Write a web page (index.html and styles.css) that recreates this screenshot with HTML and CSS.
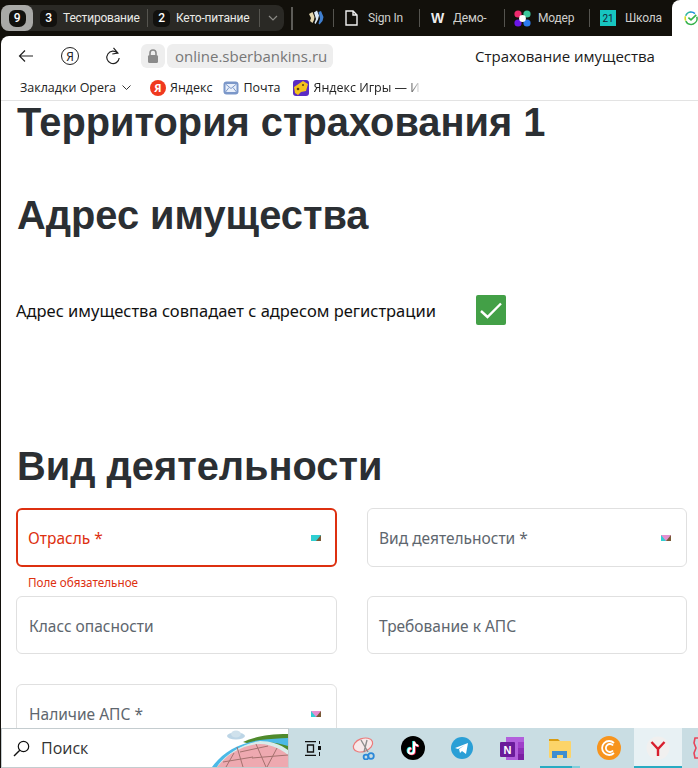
FILE: index.html
```html
<!DOCTYPE html>
<html lang="ru">
<head>
<meta charset="utf-8">
<title>Страхование имущества</title>
<link rel="stylesheet" href="styles.css">
</head>
<body>
<div class="screen">
  <header class="tabbar">
    <div class="group">
      <div class="group-all"><span class="badge shield">9</span></div>
      <span class="badge b-test">3</span><span class="group-name n-test">Тестирование</span>
      <i class="sep s-a"></i>
      <span class="badge">2</span><span class="group-name n-keto">Кето-питание</span>
      <i class="sep s-b"></i>
      <svg class="group-chev" width="10" height="6" viewBox="0 0 10 6"><path d="M1 1l4 4 4-4" fill="none" stroke="#8b8a86" stroke-width="1.2"/></svg>
    </div>
    <i class="divider"></i>
    <div class="tab t-steem">
      <svg width="16" height="16" viewBox="0 0 16 16"><path d="M1 4l3.500-2 2 5-.5 3-1.500 3-2.500-2 1-3z" fill="#e4d6ae"/><path d="M6 2.500l3-2 2 5-1 4-2.500 4.500-1-1 1.500-4z" fill="#dbe8f6"/><path d="M10.500 2l2.500-1 2.500 6-1 4-3 3.500-1-1 1.500-5z" fill="#3f7fd0"/></svg>
    </div>
    <i class="sep s-c"></i>
    <div class="tab t-sign">
      <svg width="13" height="16" viewBox="0 0 13 16"><path d="M1 1h7l4 4v10H1z M8 1v4h4" fill="none" stroke="#f1f1f1" stroke-width="1.4"/></svg>
      <span class="tab-name n-sign">Sign In</span>
    </div>
    <i class="sep s-d"></i>
    <div class="tab t-demo">
      <span class="w-logo">W</span>
      <span class="tab-name n-demo">Демо-</span>
    </div>
    <i class="sep s-e"></i>
    <div class="tab t-mod">
      <svg width="17" height="17" viewBox="0 0 17 17"><circle cx="4" cy="4" r="3.6" fill="#ee2a6e"/><circle cx="13" cy="4" r="3.6" fill="#3ec59a"/><circle cx="4" cy="13" r="3.6" fill="#6a16e8"/><circle cx="13" cy="13" r="3.6" fill="#2b7bf0"/><circle cx="8.5" cy="8.5" r="3.4" fill="#fff"/></svg>
      <span class="tab-name n-mod">Модер</span>
    </div>
    <i class="sep s-f"></i>
    <div class="tab t-school">
      <span class="school-logo">21</span>
      <span class="tab-name n-school">Школа</span>
    </div>
    <div class="tab-active">
      <svg width="16" height="16" viewBox="0 0 16 16"><path d="M2 11a6.800 6.800 0 0 1-.3-5" fill="none" stroke="#d5dc24" stroke-width="1.800"/><path d="M1.900 5.500A6.800 6.800 0 0 1 8 1.200" fill="none" stroke="#2fb5a0" stroke-width="1.800"/><path d="M7.500 1.200A6.800 6.800 0 0 1 12.500 3" fill="none" stroke="#1e8fdc" stroke-width="1.800"/><path d="M14.600 6.500A6.800 6.800 0 0 1 2 11.500" fill="none" stroke="#35b24a" stroke-width="1.800"/><path d="M5 7.500l3 2.600 6-5.600" fill="none" stroke="#35b24a" stroke-width="1.800"/></svg>
    </div>
  </header>

  <div class="window">
    <div class="toolbar">
      <svg class="tool-back" width="16" height="14" viewBox="0 0 16 14"><path d="M15 7H1.5M7 1.5L1.5 7 7 12.5" fill="none" stroke="#222" stroke-width="1.2"/></svg>
      <span class="ya-btn">Я</span>
      <svg class="tool-reload" width="16" height="18" viewBox="0 0 16 18"><path d="M12.600 6.200A6.200 6.200 0 1 0 14.200 11" fill="none" stroke="#222" stroke-width="1.200"/><path d="M8.500 .8l4.400 5.200-5.600 1" fill="none" stroke="#222" stroke-width="1.200"/></svg>
      <span class="lock">
        <svg width="12" height="14" viewBox="0 0 12 14"><path d="M3 6V4a3 3 0 0 1 6 0v2" fill="none" stroke="#8a8a8a" stroke-width="1.6"/><rect x="1" y="6" width="10" height="8" rx="1.5" fill="#8a8a8a"/></svg>
      </span>
      <span class="url">online.sberbankins.ru</span>
      <span class="page-title">Страхование имущества</span>
    </div>
    <nav class="bookmarks">
      <span class="bm-folder">Закладки Opera</span>
      <svg class="bm-chev" width="9" height="5" viewBox="0 0 9 5"><path d="M.5.5l4 4 4-4" fill="none" stroke="#333" stroke-width="1"/></svg>
      <span class="bm bm-ya"><span class="ya-red">Я</span>Яндекс</span>
      <span class="bm bm-mail">
        <svg width="16" height="16" viewBox="0 0 16 16"><rect x=".5" y="1.500" width="15" height="13" rx="3" fill="#7b97c9"/><rect x="2.500" y="4" width="11" height="8" fill="#e8effa"/><path d="M2.500 4L8 8.500 13.500 4M2.500 12L6 7.500M13.500 12L10 7.500" fill="none" stroke="#7b97c9"/></svg>
        Почта
      </span>
      <span class="bm bm-game">
        <svg width="16" height="16" viewBox="0 0 16 16"><rect width="16" height="16" rx="3" fill="#5b2bc4"/><path d="M1 7l9-6 5 3-2 7-5 1-3 3-3-2z" fill="#f5c21b"/><circle cx="5" cy="9" r="1.300" fill="#5b3a10"/><circle cx="10" cy="5" r="1" fill="#5b3a10"/></svg>
        <span class="fade">Яндекс Игры — И</span>
      </span>
    </nav>
    <main class="page">
      <h1 class="h-terr">Территория страхования 1</h1>
      <h2 class="h-addr">Адрес имущества</h2>
      <div class="same-row">
        <span class="same-label">Адрес имущества совпадает с адресом регистрации</span>
        <span class="check">
          <svg width="30" height="30" viewBox="0 0 30 30"><path d="M5 16l6.500 6L25 8.500" fill="none" stroke="#fff" stroke-width="2.400"/></svg>
        </span>
      </div>
      <h2 class="h-kind">Вид деятельности</h2>
      <div class="fields">
        <div class="field error"><span>Отрасль *</span><i class="arrow arrow-err"></i><em class="err-msg">Поле обязательное</em></div>
        <div class="field shift"><span>Вид деятельности *</span><i class="arrow"></i></div>
        <div class="field"><span>Класс опасности</span></div>
        <div class="field shift"><span>Требование к АПС</span></div>
        <div class="field last"><span>Наличие АПС *</span><i class="arrow"></i></div>
      </div>
    </main>
  </div>

  <footer class="taskbar">
    <div class="search">
      <svg class="search-ico" width="17" height="17" viewBox="0 0 17 17"><circle cx="10.500" cy="6.500" r="5.200" fill="none" stroke="#111" stroke-width="1.200"/><path d="M6.800 10.200L1 16" stroke="#111" stroke-width="1.400"/></svg>
      <span class="search-text">Поиск</span>
      <svg class="wall" width="76" height="38" viewBox="0 0 76 38">
        <ellipse cx="24" cy="7" rx="9" ry="3.500" fill="#bcd5e6"/>
        <ellipse cx="24" cy="5" rx="5" ry="3.500" fill="#cfe1ec"/>
        <path d="M31 13C42 8 56 5 76 5v20z" fill="#4f8a2c"/>
        <path d="M0 38C10 24 26 14 48 11c10-1 20-2 28-2v8c-10-3-20-5-32-3C28 16 14 26 6 38z" fill="#4cb9e6"/>
        <path d="M48 12c10 0 20 3 28 9v17H5C10 28 30 14 48 12z" fill="#d9ecea"/>
        <path d="M5 38C12 30 18 24 28 20c6-3 14-5 20-5 6 0 12 2 17 4 4 2 8 4 11 7v12z" fill="#eea9b0"/>
        <path d="M14 38l8-14M31 38l-6-20M54 38L44 15M65 19L55 38M11 33l30-5M28 23l28-6M40 29l36-3" stroke="#a4716e" fill="none"/>
      </svg>
    </div>
    <div class="tray">
      <svg class="ti-view" width="16" height="15" viewBox="0 0 16 15"><path d="M0 .7h11M0 14.300h11M2.500 4h6v7h-6z" fill="none" stroke="#111" stroke-width="1.300"/><rect x="13" y="5" width="3" height="4" fill="#111"/><path d="M14.500 0v3M14.500 11v4" stroke="#111"/></svg>
      <svg class="ti-snip" width="24" height="24" viewBox="0 0 24 24"><ellipse cx="11" cy="9" rx="10" ry="6.500" transform="rotate(-20 11 9)" fill="#f7e9ea" stroke="#ec7a7a" stroke-width="1.200"/><path d="M9 4l7 12M15 4l-3 12" stroke="#8d8d8d" stroke-width="1.400"/><circle cx="19" cy="20" r="2.800" fill="none" stroke="#2b88d8" stroke-width="1.800"/><circle cx="14" cy="21" r="2.400" fill="none" stroke="#2b88d8" stroke-width="1.800"/></svg>
      <svg class="ti-tik" width="24" height="24" viewBox="0 0 24 24"><circle cx="12" cy="12" r="12" fill="#000"/><path d="M13 5.500v9.500a2.800 2.800 0 1 1-2.800-2.800M13 5.500c.4 2.500 2 4 4.300 4.200" fill="none" stroke="#25f4ee" stroke-width="2" transform="translate(-.8 -.5)"/><path d="M13 5.500v9.500a2.800 2.800 0 1 1-2.800-2.800M13 5.500c.4 2.500 2 4 4.300 4.200" fill="none" stroke="#fe2c55" stroke-width="2" transform="translate(.8 .5)"/><path d="M13 5.500v9.500a2.800 2.800 0 1 1-2.800-2.800M13 5.500c.4 2.500 2 4 4.300 4.200" fill="none" stroke="#fff" stroke-width="2"/></svg>
      <svg class="ti-tg" width="22" height="22" viewBox="0 0 22 22"><circle cx="11" cy="11" r="11" fill="#2a9fd6"/><path d="M4 11l13-5-2 11-4-3-2 2-1-4 6-4-7 4z" fill="#fff"/></svg>
      <svg class="ti-one" width="24" height="23" viewBox="0 0 24 23"><rect x="6" width="18" height="23" fill="#b25fdc"/><rect x="18" y="5" width="6" height="6" fill="#9f3fc9"/><rect x="18" y="11" width="6" height="6" fill="#8d2fb6"/><rect x="18" y="17" width="6" height="6" fill="#7b1fa2"/><rect y="5" width="15" height="15" rx="1" fill="#6a1b9a"/><text x="3.500" y="16.500" class="one-n">N</text></svg>
      <svg class="ti-fold" width="22" height="20" viewBox="0 0 22 20"><path d="M0 1h9l2 2h-11z" fill="#d99c12"/><rect y="3" width="22" height="17" rx="1" fill="#fcd469"/><path d="M3 20v-7h15v7h-4v-3H8v3z" fill="#3f8ed1"/></svg>
      <svg class="ti-c" width="24" height="24" viewBox="0 0 24 24"><circle cx="12" cy="12" r="12" fill="#f7941d"/><path d="M17 7a7 7 0 1 0 0 10" fill="none" stroke="#fff" stroke-width="1.800"/><path d="M16 9.500a4 4 0 1 0 0 5" fill="none" stroke="#fff" stroke-width="1.800"/></svg>
      <div class="ti-ya">
        <svg width="24" height="24" viewBox="0 0 24 24"><circle cx="12" cy="12" r="11.500" fill="#f1f0ef"/><path d="M5.500 6L12 13l6.500-7M12 13v7" fill="none" stroke="#d81e2c" stroke-width="2.400"/></svg>
      </div>
      <svg class="ti-last" width="5" height="22" viewBox="0 0 5 22"><path d="M5 1H2l-1 5 2 5-2 5 1 5h3" fill="none" stroke="#e8435a" stroke-width="1.600"/></svg>
      <i class="run r-fold"></i>
      <i class="run r-last"></i>
    </div>
  </footer>
</div>
</body>
</html>
```

FILE: styles.css
```css
* { box-sizing: border-box; }
html, body { margin: 0; padding: 0; height: 100%; overflow: hidden; }
body { background: #12100b; font-family: "Noto Sans", sans-serif; }
.screen { width: 698px; height: 768px; display: flex; flex-direction: column; overflow: hidden; background: #12100b; }

/* tab strip */
.tabbar { height: 36px; flex: none; display: flex; align-items: center; color: #e9e9e6; font-family: Roboto, sans-serif; font-size: 12px; letter-spacing: -.2px; position: relative; }
.group { margin: 0 0 0 1px; width: 283px; height: 26px; background: #2a2925; border-radius: 8px; display: flex; align-items: center; flex: none; }
.group-all { width: 32px; height: 26px; background: #a9a9a7; border-radius: 8px; display: flex; align-items: center; justify-content: center; }
.badge { width: 17px; height: 17px; background: #12110e; color: #fff; border-radius: 5px; display: flex; align-items: center; justify-content: center; font-size: 12px; font-weight: 500; flex: none; }
.shield { border-radius: 6px 6px 7px 7px; }
.b-test { margin-left: 7px; }
.group-name { margin-left: 6px; white-space: nowrap; }
.n-test { width: 77px; }
.n-keto { width: 75px; }
.sep { width: 1px; height: 18px; background: #55544f; flex: none; }
.s-a { margin: 0 5px 0 7px; }
.s-b { margin-left: 8px; }
.group-chev { margin-left: 8px; }
.divider { width: 2px; height: 23px; background: #5d5c58; margin-left: 7px; flex: none; }
.tab { display: flex; align-items: center; flex: none; color: #cfcfcc; }
.t-steem { margin-left: 15px; }
.s-c { margin-left: 9px; }
.t-sign { margin-left: 11px; }
.n-sign { margin-left: 10px; width: 37px; }
.s-d { margin-left: 14px; }
.t-demo { margin-left: 11px; }
.w-logo { font-weight: 700; font-size: 14px; color: #eee; width: 14px; font-family: "Liberation Sans", sans-serif; }
.n-demo { margin-left: 8px; width: 42px; }
.s-e { margin-left: 9px; }
.t-mod { margin-left: 9px; }
.n-mod { margin-left: 7px; width: 42px; }
.s-f { margin-left: 9px; }
.t-school { margin-left: 10px; }
.school-logo { width: 16px; height: 16px; background: #17c5c0; color: #123; font-size: 10px; display: flex; align-items: center; justify-content: center; }
.n-school { margin-left: 9px; width: 38px; }
.tab-name { white-space: nowrap; overflow: hidden; }
.tab-active { position: absolute; left: 672px; top: 0; width: 26px; height: 36px; background: #fff; border-radius: 8px 0 0 0; display: flex; align-items: center; padding-left: 12px; }

/* window */
.window { flex: 1; min-height: 0; background: #fff; margin-left: 1px; border-radius: 8px 0 0 0; display: flex; flex-direction: column; overflow: hidden; }
.toolbar { height: 40px; flex: none; display: flex; align-items: center; }
.tool-back { margin-left: 17px; }
.ya-btn { margin-left: 27px; width: 18px; height: 18px; border: 1.2px solid #222; border-radius: 50%; display: flex; align-items: center; justify-content: center; font-size: 12px; color: #222; }
.tool-reload { margin-left: 26px; }
.lock { margin-left: 20px; width: 24px; height: 24px; background: #eee; border-radius: 6px; display: flex; align-items: center; justify-content: center; }
.url { margin-left: 2px; width: 166px; height: 24px; background: #eee; border-radius: 6px; padding-left: 8px; font-size: 15px; line-height: 24px; color: #777; font-family: "Open Sans", sans-serif; white-space: nowrap; }
.page-title { margin-left: 142px; font-size: 15px; letter-spacing: -.02px; color: #1a1a1a; white-space: nowrap; font-family: "Open Sans", sans-serif; }

.bookmarks { height: 25px; flex: none; display: flex; align-items: center; border-bottom: 1px solid #e3e3e3; font-size: 12.5px; color: #222; font-family: "Open Sans", sans-serif; white-space: nowrap; padding-bottom: 1px; }
.bm-folder { margin-left: 19px; width: 93px; }
.bm-chev { margin-left: 9px; }
.bm { display: flex; align-items: center; gap: 4px; }
.bm-ya { margin-left: 19px; }
.ya-red { width: 16px; height: 16px; border-radius: 50%; background: #f0391e; color: #fff; font-size: 11px; font-weight: 700; display: flex; align-items: center; justify-content: center; }
.bm-mail { margin-left: 11px; }
.bm-game { margin-left: 12px; gap: 5px; }
.fade { width: 107px; overflow: hidden; -webkit-mask-image: linear-gradient(90deg, #000 88%, transparent); mask-image: linear-gradient(90deg, #000 88%, transparent); }

/* page */
.page { flex: 1; min-height: 0; overflow: hidden; padding-left: 15px; color: #2b2f33; font-family: "Liberation Sans", sans-serif; }
.page h1, .page h2 { margin: 0; padding-left: 1px; font-size: 39.8px; font-weight: 700; white-space: nowrap; }
.h-terr { line-height: 42px; }
.h-addr { margin-top: 49px !important; line-height: 46px; }
.same-row { margin-top: 57px; height: 30px; display: flex; align-items: center; }
.same-label { font-family: "Noto Sans", sans-serif; font-size: 16.5px; color: #111; width: 460px; white-space: nowrap; }
.check { width: 30px; height: 30px; background: #43a047; border-radius: 2px; display: block; }
.check svg { display: block; }
.h-kind { margin-top: 118px !important; line-height: 46px; }
.fields { margin-top: 19px; display: grid; grid-template-columns: 321px 320px; grid-auto-rows: 59px; column-gap: 30px; row-gap: 29px; }
.field { height: 59px; border: 1px solid #e0e0e0; border-radius: 6px; display: flex; align-items: center; justify-content: space-between; padding: 0 15px 0 12px; font-family: "Noto Sans", sans-serif; font-size: 15.5px; color: #5e666e; position: relative; }
.field.shift { padding-left: 11px; }
.field:nth-child(3), .field:nth-child(4) { height: 58px; padding-top: 1px; }
.field.error { border: 2px solid #dd3010; color: #dd3010; padding-left: 10px; padding-right: 14px; }
.arrow { width: 0; height: 0; border-style: solid; border-width: 6px 5px 0; border-color: #e48fd0 #7a5a36 transparent #2fcfd2; }
.arrow-err { border-top-color: #2fcfd2; }
.err-msg { position: absolute; left: 10px; top: 64px; font-style: normal; font-size: 11.7px; line-height: 16px; color: #dd3010; white-space: nowrap; }

/* taskbar */
.taskbar { height: 40px; flex: none; display: flex; background: #c9dde3; margin-left: 1px; }
.search { width: 288px; height: 40px; flex: none; background: #fff; border: 1px solid #c4cccf; display: flex; align-items: center; position: relative; overflow: hidden; }
.search-ico { margin-left: 11px; }
.search-text { margin-left: 11px; font-size: 16px; color: #333; font-family: "Open Sans", sans-serif; }
.wall { position: absolute; right: 0; top: 0; }
.tray { flex: 1; position: relative; display: flex; align-items: center; overflow: hidden; }
.ti-view { margin-left: 16px; flex: none; }
.ti-snip { margin-left: 31px; flex: none; }
.ti-tik { margin-left: 25px; flex: none; }
.ti-tg { margin-left: 26px; flex: none; }
.ti-one { margin-left: 27px; flex: none; }
.ti-fold { margin-left: 25px; flex: none; }
.ti-c { margin-left: 26px; flex: none; }
.ti-ya { margin-left: 13px; width: 48px; height: 40px; background: #e8f1f4; display: flex; align-items: center; justify-content: center; flex: none; }
.ti-last { margin-left: 11px; flex: none; }
.run { position: absolute; bottom: 0; height: 2px; background: #29abc2; }
.r-fold { left: 251px; width: 40px; background: linear-gradient(90deg, #29abc2 80%, #7fcfdc 80%); }
.r-last { left: 345px; width: 48px; }
.one-n { font: 700 11px "Liberation Sans", sans-serif; fill: #fff; }
```
